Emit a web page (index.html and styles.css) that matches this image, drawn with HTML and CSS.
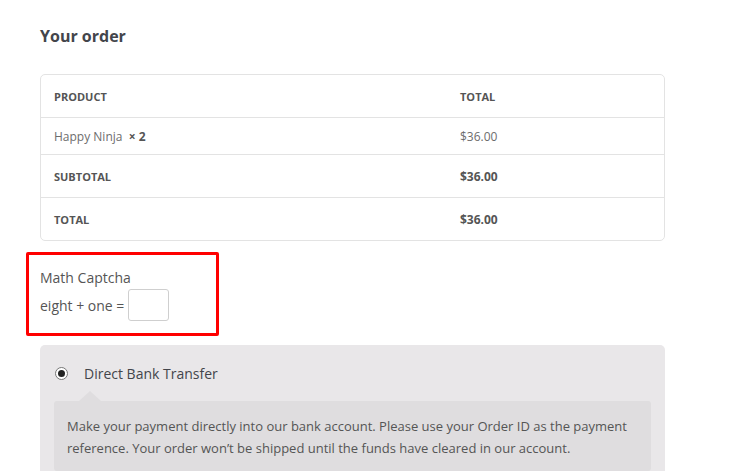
FILE: index.html
```html
<!DOCTYPE html>
<html>
<head>
<meta charset="utf-8">
<link rel="stylesheet" href="styles.css">
</head>
<body>
<div class="page">
  <h3 class="heading">Your order</h3>
  <div class="table-wrap">
    <table class="order">
      <thead>
        <tr><th class="c1">Product</th><th class="c2">Total</th></tr>
      </thead>
      <tbody>
        <tr class="item"><td>Happy Ninja&nbsp; <strong>× 2</strong></td><td>$36.00</td></tr>
      </tbody>
      <tfoot>
        <tr><th>Subtotal</th><td><strong>$36.00</strong></td></tr>
        <tr class="last"><th>Total</th><td><strong>$36.00</strong></td></tr>
      </tfoot>
    </table>
  </div>
  <div class="captcha">
    <div class="cap-title">Math Captcha</div>
    <div class="cap-row"><span>eight + one =</span><input class="cap-input" type="text"></div>
  </div>
  <div class="payment">
    <div class="method">
      <span class="radio"><span class="dot"></span></span>
      <span class="method-label">Direct Bank Transfer</span>
    </div>
    <div class="desc">
      <p>Make your payment directly into our bank account. Please use your Order ID as the payment reference. Your order won’t be shipped until the funds have cleared in our account.</p>
    </div>
  </div>
</div>
</body>
</html>
```
FILE: styles.css
```css
html, body {
  margin: 0;
  padding: 0;
  background: #ffffff;
  height: 471px;
  overflow: hidden;
}
body {
  font-family: "Open Sans", "Liberation Sans", sans-serif;
  color: #555;
}
.page {
  padding: 0 0 0 40px;
  width: 625px;
  height: 471px;
  overflow: hidden;
}
.heading {
  margin: 0;
  padding-top: 25px;
  font-size: 16px;
  line-height: 22px;
  font-weight: 700;
  color: #43454b;
  height: 49px;
  box-sizing: content-box;
}
.table-wrap {
  border: 1px solid #e3e3e3;
  border-radius: 5px;
  overflow: hidden;
}
.order {
  width: 100%;
  border-collapse: collapse;
  table-layout: fixed;
}
.order th, .order td {
  text-align: left;
  padding: 0 13px;
  border-bottom: 1px solid #e3e3e3;
  font-size: 12px;
}
.order .c1 { width: 380px; }
.order th {
  font-size: 11px;
  font-weight: 700;
  text-transform: uppercase;
  color: #555;
  height: 42px;
}
.order td {
  color: #6d6d6d;
  height: 36px;
}
.order tfoot td { height: 42px; }
.order td strong {
  font-weight: 700;
  color: #555;
}
.order .last th, .order .last td { border-bottom: none; height: 42px; }
.captcha {
  margin: 11px 0 0 -14px;
  width: 176px;
  height: 78px;
  border: 3px solid #ff0000;
  border-radius: 2px;
  padding: 0 0 0 11px;
  box-sizing: content-box;
}
.cap-title {
  margin-top: 13px;
  font-size: 14px;
  line-height: 20px;
  color: #555;
}
.cap-row {
  display: flex;
  align-items: center;
  gap: 4px;
  margin-top: 1px;
  font-size: 14px;
  color: #555;
}
.cap-input {
  width: 41px;
  height: 32px;
  box-sizing: border-box;
  border: 1px solid #cfcfcf;
  border-radius: 3px;
  background: #fff;
  margin: 0;
  padding: 0;
}
.payment {
  margin-top: 9px;
  background: #e9e7e9;
  border-radius: 5px 5px 0 0;
  padding: 15px 14px 0 14px;
  height: 200px;
}
.method {
  display: flex;
  align-items: center;
  height: 27px;
}
.radio {
  width: 11px;
  height: 11px;
  border-radius: 50%;
  border: 1px solid #777;
  background: #fff;
  display: flex;
  align-items: center;
  justify-content: center;
  margin-left: 1px;
}
.dot {
  width: 7px;
  height: 7px;
  border-radius: 50%;
  background: #222;
}
.method-label {
  margin-left: 16px;
  font-size: 14px;
  color: #43454b;
}
.desc {
  position: relative;
  margin-top: 14px;
  background: #dfdddf;
  border-radius: 3px;
  padding: 14px 13px 12px;
}
.desc::before {
  content: "";
  position: absolute;
  top: -10px;
  left: 25px;
  border-left: 11px solid transparent;
  border-right: 11px solid transparent;
  border-bottom: 10px solid #dfdddf;
}
.desc p {
  margin: 0;
  font-size: 13px;
  line-height: 22px;
  color: #555;
}
```
